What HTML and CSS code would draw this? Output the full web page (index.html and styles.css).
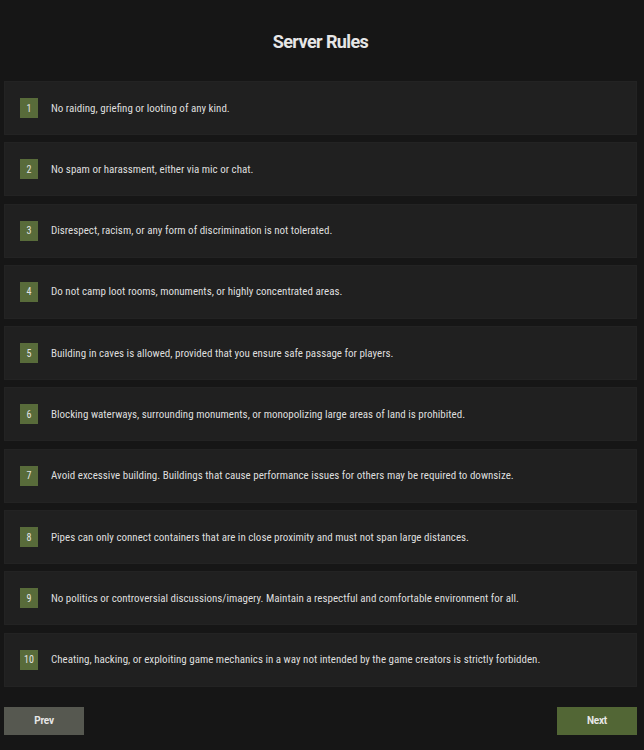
FILE: index.html
```html
<!DOCTYPE html>
<html lang="en">
<head>
  <meta charset="UTF-8" />
  <meta name="viewport" content="width=device-width, initial-scale=1.0"/>
  <title>Server Rules</title>
  <link rel="stylesheet" href="styles.css">
</head>
<body>

  <div class="container">
    <h1>Server Rules</h1>

    <ul class="rules">
      <li class="rule"><span class="num">1</span><span>No raiding, griefing or looting of any kind.</span></li>
      <li class="rule"><span class="num">2</span><span>No spam or harassment, either via mic or chat.</span></li>
      <li class="rule"><span class="num">3</span><span>Disrespect, racism, or any form of discrimination is not tolerated.</span></li>
      <li class="rule"><span class="num">4</span><span>Do not camp loot rooms, monuments, or highly concentrated areas.</span></li>
      <li class="rule"><span class="num">5</span><span>Building in caves is allowed, provided that you ensure safe passage for players.</span></li>
      <li class="rule"><span class="num">6</span><span>Blocking waterways, surrounding monuments, or monopolizing large areas of land is prohibited.</span></li>
      <li class="rule"><span class="num">7</span><span>Avoid excessive building. Buildings that cause performance issues for others may be required to downsize.</span></li>
      <li class="rule"><span class="num">8</span><span>Pipes can only connect containers that are in close proximity and must not span large distances.</span></li>
      <li class="rule"><span class="num">9</span><span>No politics or controversial discussions/imagery. Maintain a respectful and comfortable environment for all.</span></li>
      <li class="rule"><span class="num">10</span><span>Cheating, hacking, or exploiting game mechanics in a way not intended by the game creators is strictly forbidden.</span></li>
    </ul>

    <div class="nav">
      <button class="btn prev">Prev</button>
      <button class="btn next">Next</button>
    </div>
  </div>

</body>
</html>
```

FILE: styles.css
```css
body {
  margin: 0;
  background: #161616;
  color: #dedede;
  font-family: "Liberation Sans Narrow", "Roboto Condensed", Roboto, sans-serif;
}
.container {
  padding: 0 7px 0 4px;
}
h1 {
  margin: 0;
  height: 81px;
  line-height: 84px;
  text-align: center;
  font-family: Roboto, sans-serif;
  font-size: 18px;
  font-weight: bold;
  letter-spacing: -0.6px;
  color: #e6e6e6;
}
.rules {
  list-style: none;
  margin: 0;
  padding: 0;
  display: flex;
  flex-direction: column;
  gap: 7.3px;
}
.rule {
  display: flex;
  align-items: center;
  height: 54px;
  padding: 0 15px;
  background: #202020;
  border: 1px solid #232323;
  box-sizing: border-box;
  font-size: 11px;
}
.num {
  width: 18px;
  height: 20px;
  margin-right: 13px;
  display: flex;
  align-items: center;
  justify-content: center;
  background: #586b3a;
  color: #e4e4e4;
  font-size: 10px;
  flex-shrink: 0;
}
.nav {
  display: flex;
  justify-content: space-between;
  margin-top: 20px;
}
.btn {
  width: 80px;
  height: 28px;
  border: none;
  font-family: Roboto, sans-serif;
  font-size: 10px;
  font-weight: bold;
  letter-spacing: -0.2px;
  color: #e8e8e8;
  cursor: pointer;
}
.prev {
  background: #565850;
}
.next {
  background: #526635;
}
```
